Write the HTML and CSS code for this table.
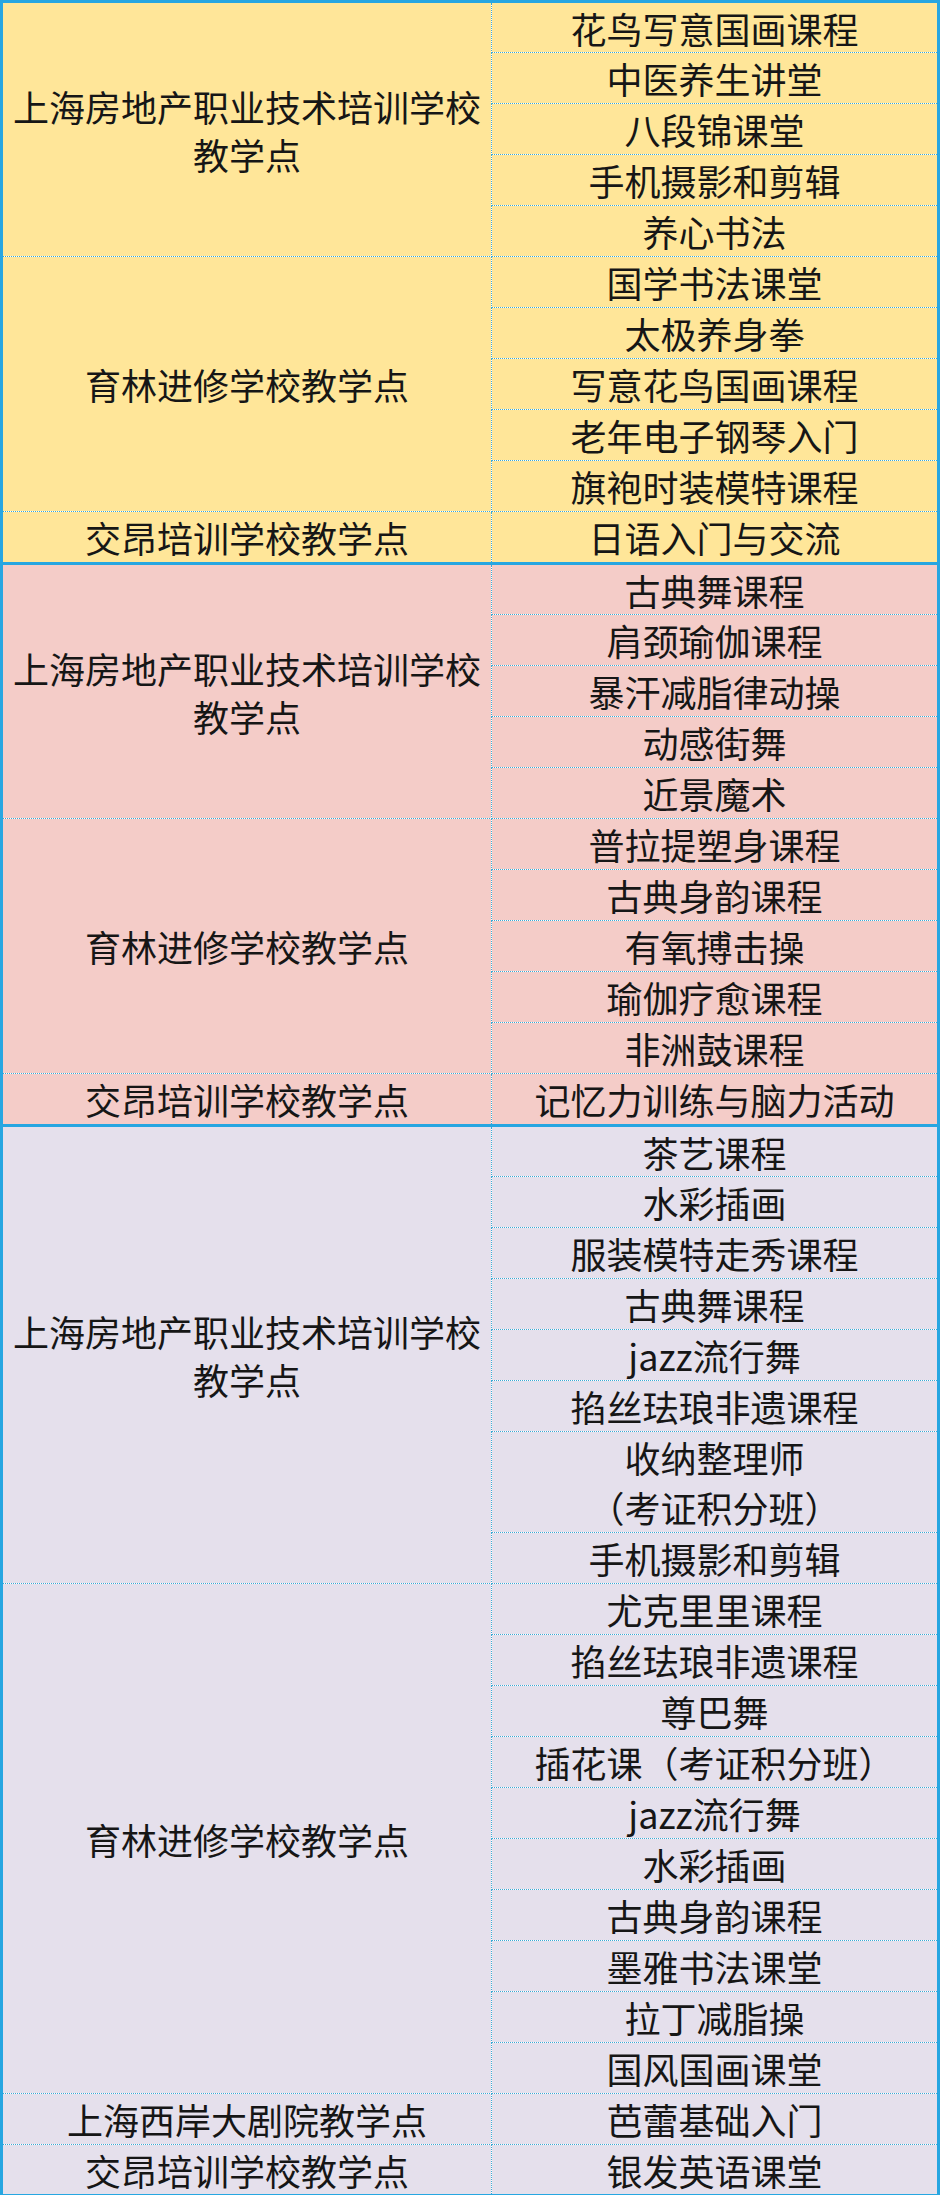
FILE: index.html
```html
<!DOCTYPE html>
<html lang="zh-CN">
<head>
<meta charset="utf-8">
<title>教学点课程</title>
<link rel="stylesheet" href="styles.css">
</head>
<body>
<table class="courses">
<colgroup><col class="c-site"><col class="c-course"></colgroup>
<tbody class="yellow">
<tr class="sec"><td class="site" rowspan="5">上海房地产职业技术培训学校教学点</td><td>花鸟写意国画课程</td></tr>
<tr><td>中医养生讲堂</td></tr>
<tr><td>八段锦课堂</td></tr>
<tr><td>手机摄影和剪辑</td></tr>
<tr><td>养心书法</td></tr>
<tr><td class="site" rowspan="5">育林进修学校教学点</td><td>国学书法课堂</td></tr>
<tr><td>太极养身拳</td></tr>
<tr><td>写意花鸟国画课程</td></tr>
<tr><td>老年电子钢琴入门</td></tr>
<tr><td>旗袍时装模特课程</td></tr>
<tr><td class="site">交昂培训学校教学点</td><td>日语入门与交流</td></tr>
</tbody>
<tbody class="pink">
<tr class="sec"><td class="site" rowspan="5">上海房地产职业技术培训学校教学点</td><td>古典舞课程</td></tr>
<tr><td>肩颈瑜伽课程</td></tr>
<tr><td>暴汗减脂律动操</td></tr>
<tr><td>动感街舞</td></tr>
<tr><td>近景魔术</td></tr>
<tr><td class="site" rowspan="5">育林进修学校教学点</td><td>普拉提塑身课程</td></tr>
<tr><td>古典身韵课程</td></tr>
<tr><td>有氧搏击操</td></tr>
<tr><td>瑜伽疗愈课程</td></tr>
<tr><td>非洲鼓课程</td></tr>
<tr><td class="site">交昂培训学校教学点</td><td>记忆力训练与脑力活动</td></tr>
</tbody>
<tbody class="purple">
<tr class="sec"><td class="site" rowspan="8">上海房地产职业技术培训学校教学点</td><td>茶艺课程</td></tr>
<tr><td>水彩插画</td></tr>
<tr><td>服装模特走秀课程</td></tr>
<tr><td>古典舞课程</td></tr>
<tr><td>jazz流行舞</td></tr>
<tr><td>掐丝珐琅非遗课程</td></tr>
<tr class="double"><td>收纳整理师<br>（考证积分班）</td></tr>
<tr><td>手机摄影和剪辑</td></tr>
<tr><td class="site" rowspan="10">育林进修学校教学点</td><td>尤克里里课程</td></tr>
<tr><td>掐丝珐琅非遗课程</td></tr>
<tr><td>尊巴舞</td></tr>
<tr><td>插花课（考证积分班）</td></tr>
<tr><td>jazz流行舞</td></tr>
<tr><td>水彩插画</td></tr>
<tr><td>古典身韵课程</td></tr>
<tr><td>墨雅书法课堂</td></tr>
<tr><td>拉丁减脂操</td></tr>
<tr><td>国风国画课堂</td></tr>
<tr><td class="site">上海西岸大剧院教学点</td><td>芭蕾基础入门</td></tr>
<tr class="last"><td class="site">交昂培训学校教学点</td><td>银发英语课堂</td></tr>
</tbody>
</table>
</body>
</html>
```

FILE: styles.css
```css
html, body {
  margin: 0;
  padding: 0;
  background: #ffffff;
}

.courses {
  width: 940px;
  table-layout: fixed;
  border-collapse: collapse;
  border: 3px solid #27a6e1;
  font-family: "Noto Sans CJK SC", "Microsoft YaHei", sans-serif;
  font-size: 36px;
  color: #161616;
}

.c-site { width: 490px; }

.courses td {
  height: 50px;
  padding: 0 2px;
  line-height: 48px;
  text-align: center;
  vertical-align: middle;
  border: 1px dotted #3aa9d4;
  white-space: nowrap;
  overflow: hidden;
}

.courses td.site {
  white-space: normal;
  line-height: 48px;
}

.courses tr.double td {
  height: 100px;
  line-height: 50px;
}

.courses tr.sec td {
  height: 49px;
  border-top: 3px solid #27a6e1;
}

.courses tr.sec td.site { height: auto; }

.courses tr.last td { height: 49px; }

.yellow td { background: #ffe699; }
.pink td { background: #f4ccc8; }
.purple td { background: #e5e0ec; }
```
